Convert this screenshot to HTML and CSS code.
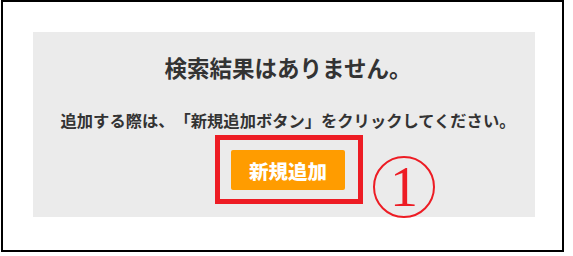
FILE: index.html
```html
<!DOCTYPE html>
<html lang="ja">

<head>
    <meta charset="UTF-8">
    <title>検索結果</title>
    <link rel="stylesheet" href="styles.css">
</head>

<body>

    <div class="frame">
        <div class="empty-panel">
            <div class="empty-title">検索結果はありません。</div>
            <div class="empty-text">追加する際は、「新規追加ボタン」をクリックしてください。</div>

            <div class="mark-wrap">
                <div class="mark-box">
                    <button class="add-btn">新規追加</button>
                </div>
                <!-- annotation circle -->
                <span class="mark-num">1</span>
            </div>
        </div>
    </div>

</body>

</html>
```

FILE: styles.css
```css
body {
    margin: 0;
    font-family: "Noto Sans CJK JP", "Noto Sans", sans-serif;
    background: #fff;
}

.frame {
    margin-left: 1px;
    width: 563px;
    height: 252px;
    border: 2px solid #000;
    box-sizing: border-box;
    padding-top: 30px;
    padding-left: 30px;
}

.empty-panel {
    width: 502px;
    height: 185px;
    background-color: #ebebeb;
    text-align: center;
    padding-top: 20px;
    box-sizing: border-box;
    text-spacing-trim: space-all;
}

.empty-title {
    font-size: 22.5px;
    line-height: 30px;
    font-weight: bold;
    color: #333;
    padding-left: 8px;
}

.empty-text {
    margin-top: 26px;
    font-size: 16.3px;
    line-height: 24px;
    font-weight: bold;
    color: #333;
    padding-left: 8px;
}

.mark-wrap {
    position: relative;
    display: inline-block;
    margin-top: 3px;
    margin-left: 10px;
}

.mark-box {
    border: 5px solid #ed1c24;
    padding: 10px 13px 9px 11px;
    line-height: 0;
}

.add-btn {
    width: 114px;
    height: 40px;
    background-color: #ff9c00;
    border: none;
    border-radius: 2px;
    color: #fff;
    font-family: "Noto Sans CJK JP", sans-serif;
    font-size: 19.5px;
    font-weight: 900;
    padding: 0;
    cursor: pointer;
}

.mark-num {
    position: absolute;
    left: 158px;
    top: 21px;
    width: 62px;
    height: 62px;
    border: 2px solid #ed1c24;
    border-radius: 50%;
    box-sizing: border-box;
    color: #ed1c24;
    font-family: "Liberation Serif", serif;
    font-size: 56px;
    line-height: 58px;
    text-align: center;
}
```
